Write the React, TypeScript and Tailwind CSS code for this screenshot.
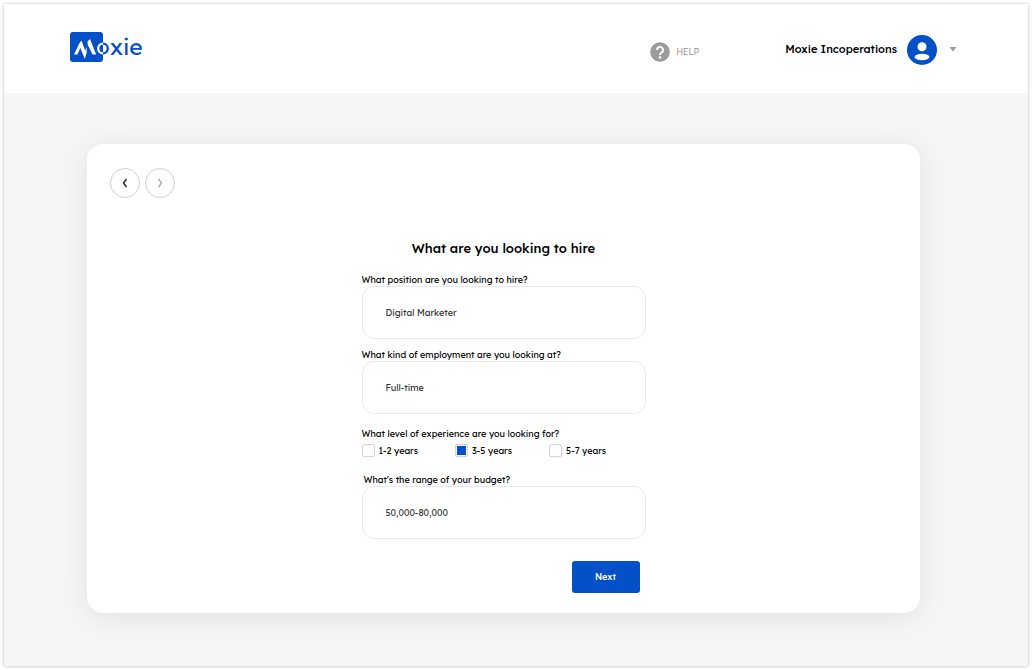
import { useState } from "react";

const fields = {
  position: "What position are you looking to hire?",
  employment: "What kind of employment are you looking at?",
  budget: "What's the range of your budget?",
};

const levels = ["1-2 years", "3-5 years", "5-7 years"];

function Logo() {
  return (
    <a href="#home" aria-label="Moxie" className="flex items-center text-[#0450c8]">
      <svg width="40" height="30" viewBox="0 0 40 30" aria-hidden="true">
        <rect width="33" height="30" rx="3" fill="#0450c8" />
        <path
          d="M4 22.500 L9.500 11 L11.500 8.500 L15.200 18.500 L16.600 15 L16.600 21 L14.800 27 L10.300 16 L7.500 22.500 Z"
          fill="#fff"
        />
        <path d="M17.500 9.500 L20 7 L26.200 22.500 L22.600 22.500 L17.800 13 Z" fill="#fff" />
        <circle cx="33" cy="16.500" r="4.800" fill="none" stroke="#0450c8" strokeWidth="2.300" />
        <path d="M33 11.700 A4.800 4.800 0 0 0 33 21.300" fill="none" stroke="#fff" strokeWidth="2.300" />
      </svg>
      <span className="text-[23px] leading-7">xie</span>
    </a>
  );
}

function Chevron({ flip = false }: { flip?: boolean }) {
  return (
    <svg width="6" height="10" viewBox="0 0 6 10" fill="none" stroke="currentColor" strokeWidth="1.400" className={flip ? "rotate-180" : ""} aria-hidden="true">
      <path d="M4.500 1 L1.500 5 L4.500 9" />
    </svg>
  );
}

function Field({ id, label, value, inset = false }: { id: string; label: string; value: string; inset?: boolean }) {
  return (
    <div className="flex flex-col">
      <label htmlFor={id} className={inset ? "pl-0.5 text-[9px] leading-3" : "text-[9px] leading-3"}>
        {label}
      </label>
      <input
        id={id}
        defaultValue={value}
        className="h-[53px] w-full rounded-xl border border-[#e8e8e8] bg-white px-[23px] text-[9px] text-[#333] outline-none"
      />
    </div>
  );
}

export default function App() {
  const [level, setLevel] = useState("3-5 years");
  return (
    <div className="min-h-screen bg-white p-1 font-['Lexend','Inter',sans-serif] text-black">
      <div className="flex min-h-[calc(100vh-8px)] flex-col bg-[#f6f6f6] shadow-[0_0_3px_rgba(0,0,0,0.3)]">
        <header className="flex h-[89px] items-center bg-white pr-[71px] pl-[66px]">
          <div className="pb-1">
            <Logo />
          </div>
          <div className="ml-auto flex items-center pt-0.5">
            <a href="#help" className="mr-[86px] flex items-center gap-1.5 pt-1 text-[9px] font-light text-[#8b8b8b]">
              <svg width="20" height="20" viewBox="0 0 20 20" aria-hidden="true">
                <circle cx="10" cy="10" r="9.800" fill="#9b9b9b" />
                <path d="M7 8 A3 3 0 1 1 11.500 10.500 Q10 11.400 10 13" fill="none" stroke="#fff" strokeWidth="1.900" />
                <circle cx="10" cy="15.500" r="1.200" fill="#fff" />
              </svg>
              HELP
            </a>
            <button type="button" className="flex items-center text-[11px] font-medium">
              Moxie Incoperations
              <svg width="30" height="30" viewBox="0 0 30 30" className="ml-2.5" aria-hidden="true">
                <circle cx="15" cy="15" r="15" fill="#0450c8" />
                <circle cx="15" cy="11.800" r="4.500" fill="#fff" />
                <ellipse cx="15" cy="22" rx="7.500" ry="3.300" fill="#fff" />
              </svg>
              <svg width="8" height="5" viewBox="0 0 8 5" className="ml-3" aria-hidden="true">
                <path d="M0.500 0 H7.500 L4 4.500 Z" fill="#9b9b9b" />
              </svg>
            </button>
          </div>
        </header>
        <main className="flex-1 pt-[51px] pr-[108px] pb-[52px] pl-[83px]">
          <section className="rounded-2xl bg-white px-[23px] pt-6 pb-5 shadow-[0_4px_30px_rgba(0,0,0,0.09)]">
            <nav className="flex gap-[5px]">
              <button type="button" aria-label="Back" className="flex size-[30px] items-center justify-center rounded-full border border-[#cfcfcf] text-[#222]">
                <Chevron />
              </button>
              <button type="button" aria-label="Forward" className="flex size-[30px] items-center justify-center rounded-full border border-[#cfcfcf] text-[#aaa]">
                <Chevron flip />
              </button>
            </nav>
            <form className="mx-auto mt-10 flex w-[284px] max-w-full flex-col" onSubmit={(e) => e.preventDefault()}>
              <h1 className="text-center text-[13px] leading-5 font-medium">What are you looking to hire</h1>
              <div className="mt-4 flex flex-col gap-2.5">
                <Field id="position" label={fields.position} value="Digital Marketer" />
                <Field id="employment" label={fields.employment} value="Full-time" />
              </div>
              <fieldset className="mt-3.5">
                <legend className="text-[9px] leading-3">What level of experience are you looking for?</legend>
                <div className="flex gap-[37px] pt-1">
                  {levels.map((name) => (
                    <label key={name} className="flex items-center gap-1 text-[9px] leading-3">
                      <input
                        type="checkbox"
                        checked={level === name}
                        onChange={() => setLevel(name)}
                        className="size-[13px] appearance-none rounded-xs border border-[#d4d4d4] bg-white bg-clip-content p-px checked:bg-[#0450c8]"
                      />
                      {name}
                    </label>
                  ))}
                </div>
              </fieldset>
              <div className="mt-[17px]">
                <Field id="budget" label={fields.budget} value="50,000-80,000" inset />
              </div>
              <button type="submit" className="mt-[22px] mr-1.5 h-8 w-[68px] self-end rounded-[3px] bg-[#0450c8] text-[9px] font-medium text-white">
                Next
              </button>
            </form>
          </section>
        </main>
      </div>
    </div>
  );
}
